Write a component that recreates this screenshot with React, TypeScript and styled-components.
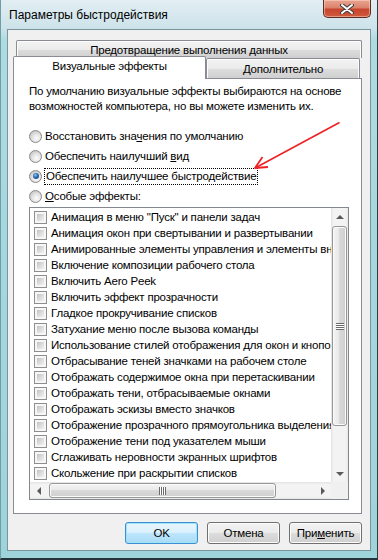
import React from "react";
import styled, { createGlobalStyle, css } from "styled-components";

const GlobalStyle = createGlobalStyle`
  html, body {
    margin: 0;
    padding: 0;
    background: #fff;
  }
  body {
    font-family: "Liberation Sans", Arial, sans-serif;
    font-size: 11.5px;
    letter-spacing: -0.2px;
    color: #000;
  }
`;

const effects = [
  'Анимация в меню "Пуск" и панели задач',
  "Анимация окон при свертывании и развертывании",
  "Анимированные элементы управления и элементы внутри окна",
  "Включение композиции рабочего стола",
  "Включить Aero Peek",
  "Включить эффект прозрачности",
  "Гладкое прокручивание списков",
  "Затухание меню после вызова команды",
  "Использование стилей отображения для окон и кнопок",
  "Отбрасывание теней значками на рабочем столе",
  "Отображать содержимое окна при перетаскивании",
  "Отображать тени, отбрасываемые окнами",
  "Отображать эскизы вместо значков",
  "Отображение прозрачного прямоугольника выделения",
  "Отображение тени под указателем мыши",
  "Сглаживать неровности экранных шрифтов",
  "Скольжение при раскрытии списков",
];

export default function App() {
  return (
    <>
      <GlobalStyle />
      <Window>
        <TitleBar>
          <Title>Параметры быстродействия</Title>
          <CloseButton>
            <svg width="14" height="10" viewBox="0 0 14 10">
              <path d="M2 1 L12 9 M12 1 L2 9" stroke="#3d3d3d" strokeWidth="4" strokeLinecap="round" />
              <path d="M2 1 L12 9 M12 1 L2 9" stroke="#ffffff" strokeWidth="2" strokeLinecap="round" />
            </svg>
          </CloseButton>
        </TitleBar>

        <Client>
          <TabArea>
            <TabRow>
              <Tab $width={346} $height={18} $indent={3}>
                Предотвращение выполнения данных
              </Tab>
            </TabRow>
            <TabRow $front>
              <Tab $width={193} $height={23} $selected>
                Визуальные эффекты
              </Tab>
              <Tab $width={154} $height={20}>
                Дополнительно
              </Tab>
            </TabRow>
          </TabArea>

          <Panel>
            <Description>
              <Line>По умолчанию визуальные эффекты выбираются на основе</Line>
              <Line>возможностей компьютера, но вы можете изменить их.</Line>
            </Description>

            <RadioGroup>
              <RadioRow>
                <RadioMark />
                <span>
                  Восстановить зна<Mn>ч</Mn>ения по умолчанию
                </span>
              </RadioRow>
              <RadioRow>
                <RadioMark />
                <span>
                  Обеспечить наилучший <Mn>в</Mn>ид
                </span>
              </RadioRow>
              <RadioRow>
                <RadioMark $checked />
                <Focused>Обеспечить наилучшее быстродействие</Focused>
              </RadioRow>
              <RadioRow>
                <RadioMark />
                <span>
                  <Mn>О</Mn>собые эффекты:
                </span>
              </RadioRow>
            </RadioGroup>

            <ListBox>
              <ListItems>
                {effects.map((text) => (
                  <ListItem key={text}>
                    <CheckMark />
                    <span>{text}</span>
                  </ListItem>
                ))}
              </ListItems>

              <VScroll>
                <ArrowBox>
                  <Arrow $dir="up" />
                </ArrowBox>
                <ScrollTrack $vertical>
                  <Thumb $vertical $size={200} $offset={1}>
                    <Grip $vertical />
                  </Thumb>
                </ScrollTrack>
                <ArrowBox>
                  <Arrow $dir="down" />
                </ArrowBox>
              </VScroll>

              <HScroll>
                <ArrowBox>
                  <Arrow $dir="left" />
                </ArrowBox>
                <ScrollTrack>
                  <Thumb $size={227} $offset={1}>
                    <Grip />
                  </Thumb>
                </ScrollTrack>
                <ArrowBox>
                  <Arrow $dir="right" />
                </ArrowBox>
              </HScroll>

              <Corner />
            </ListBox>
          </Panel>

          <ButtonRow>
            <Button $default>OK</Button>
            <Button>Отмена</Button>
            <Button>
              При<Mn>м</Mn>енить
            </Button>
          </ButtonRow>
        </Client>

        <Annotation width="378" height="560" viewBox="0 0 378 560">
          <path d="M338.5 122.5 L255 167.5" stroke="#ee2124" strokeWidth="1.6" fill="none" />
          <path d="M267 167 L254 168 L261.5 157" stroke="#ee2124" strokeWidth="1.8" fill="none" strokeLinejoin="round" />
        </Annotation>
      </Window>
    </>
  );
}

const Window = styled.div`
  position: relative;
  width: 378px;
  height: 560px;
  box-sizing: border-box;
  display: flex;
  flex-direction: column;
  background: linear-gradient(180deg, #e2eef3 0px, #cde3ea 28px, #aedbe1 40px, #a4d6dd 300px, #9fd3da 100%);
  border-left: 1px solid #6f9ea6;
  border-right: 1px solid #2f3d44;
  border-bottom: 2px solid #26333a;
  overflow: hidden;
`;

const TitleBar = styled.div`
  height: 29px;
  flex: none;
  display: flex;
  justify-content: space-between;
  align-items: flex-start;
  padding-right: 6px;
`;

const Title = styled.div`
  padding: 7px 0 0 8px;
  line-height: 16px;
  font-size: 12px;
  letter-spacing: 0;
  color: #000;
`;

const CloseButton = styled.div`
  width: 48px;
  height: 18px;
  box-sizing: border-box;
  display: flex;
  align-items: center;
  justify-content: center;
  border: 1px solid #5c2c24;
  border-top: none;
  border-radius: 0 0 5px 5px;
  background: linear-gradient(180deg, #e9a593 0%, #dc826c 45%, #c8452e 55%, #d05a3c 100%);
  box-shadow: inset 0 0 0 1px rgba(255, 220, 200, 0.5);
`;

const Client = styled.div`
  flex: 1;
  margin: 0 6px 7px 6px;
  box-sizing: border-box;
  display: flex;
  flex-direction: column;
  background: #f0f0f0;
  border: 1px solid #7b949c;
  padding: 10px 8px 6px 5px;
`;

const TabArea = styled.div`
  display: flex;
  flex-direction: column;
`;

const TabRow = styled.div<{ $front?: boolean }>`
  display: flex;
  align-items: flex-end;
  ${(p) =>
    p.$front &&
    css`
      height: 22px;
      margin-top: -2px;
    `}
`;

const Tab = styled.div<{ $width: number; $height: number; $selected?: boolean; $indent?: number }>`
  width: ${(p) => p.$width}px;
  height: ${(p) => p.$height}px;
  margin-left: ${(p) => p.$indent || 0}px;
  box-sizing: border-box;
  display: flex;
  align-items: center;
  justify-content: center;
  border: 1px solid #898c95;
  border-bottom: none;
  border-radius: 2px 2px 0 0;
  background: linear-gradient(180deg, #f3f3f3 0%, #ebebeb 50%, #dddddd 51%, #cfcfcf 100%);
  box-shadow: inset 1px 1px 0 #fcfcfc, inset -1px 0 0 #fcfcfc;
  white-space: nowrap;
  ${(p) =>
    p.$selected &&
    css`
      position: relative;
      z-index: 1;
      margin-bottom: -1px;
      padding-bottom: 4px;
      background: #fff;
      box-shadow: none;
    `}
`;

const Panel = styled.div`
  flex: 1;
  box-sizing: border-box;
  background: #fff;
  border: 1px solid #898c95;
  padding: 5px 12px 13px 15px;
  display: flex;
  flex-direction: column;
`;

const Description = styled.div`
  line-height: 15px;
`;

const Line = styled.div`
  white-space: nowrap;
`;

const RadioGroup = styled.div`
  margin-top: 12px;
  display: flex;
  flex-direction: column;
`;

const RadioRow = styled.div`
  height: 20px;
  display: flex;
  align-items: center;
  gap: 3px;
  white-space: nowrap;
`;

const RadioMark = styled.span<{ $checked?: boolean }>`
  position: relative;
  flex: none;
  width: 13px;
  height: 13px;
  box-sizing: border-box;
  border-radius: 50%;
  border: 1px solid #8a8a8a;
  background: radial-gradient(circle at 60% 65%, #fbfbfb 0%, #e9e9e9 35%, #c9c9c9 75%, #eeeeee 100%);
  ${(p) =>
    p.$checked &&
    css`
      &::after {
        content: "";
        position: absolute;
        left: 2.5px;
        top: 2.5px;
        width: 6px;
        height: 6px;
        border-radius: 50%;
        background: radial-gradient(circle at 40% 35%, #8cc8f0 0%, #2a68b0 45%, #143a6e 100%);
      }
    `}
`;

const Focused = styled.span`
  outline: 1px dotted #000;
  outline-offset: 0;
  padding: 0 1px;
  line-height: 15px;
`;

const Mn = styled.span`
  text-decoration: underline;
`;

const ListBox = styled.div`
  margin-top: 1px;
  flex: 1;
  box-sizing: border-box;
  border: 1px solid #828790;
  background: #fff;
  display: grid;
  grid-template-columns: minmax(0, 1fr) 17px;
  grid-template-rows: minmax(0, 1fr) 17px;
  overflow: hidden;
`;

const ListItems = styled.div`
  grid-column: 1;
  grid-row: 1;
  padding-top: 1px;
  overflow: hidden;
`;

const ListItem = styled.div`
  height: 16px;
  display: flex;
  align-items: center;
  gap: 4px;
  padding-left: 4px;
  white-space: nowrap;
`;

const CheckMark = styled.span`
  position: relative;
  flex: none;
  width: 13px;
  height: 13px;
  box-sizing: border-box;
  border: 1px solid #8e8f8f;
  background: #f6f6f6;
  &::after {
    content: "";
    position: absolute;
    inset: 2px;
    background: linear-gradient(135deg, #c4c4c4 0%, #dedede 55%, #f2f2f2 100%);
  }
`;

const VScroll = styled.div`
  grid-column: 2;
  grid-row: 1;
  display: flex;
  flex-direction: column;
  background: linear-gradient(90deg, #e3e3e3 0%, #f3f3f3 15%, #f3f3f3 85%, #e8e8e8 100%);
`;

const HScroll = styled.div`
  grid-column: 1;
  grid-row: 2;
  display: flex;
  background: linear-gradient(180deg, #e3e3e3 0%, #f3f3f3 15%, #f3f3f3 85%, #e8e8e8 100%);
`;

const Corner = styled.div`
  grid-column: 2;
  grid-row: 2;
  background: #f0f0f0;
`;

const ArrowBox = styled.div`
  flex: none;
  width: 17px;
  height: 17px;
  display: flex;
  align-items: center;
  justify-content: center;
`;

const Arrow = styled.span<{ $dir: "up" | "down" | "left" | "right" }>`
  width: 0;
  height: 0;
  ${(p) =>
    p.$dir === "up"
      ? css`
          border-left: 4px solid transparent;
          border-right: 4px solid transparent;
          border-bottom: 4px solid #5a5a5a;
        `
      : p.$dir === "down"
      ? css`
          border-left: 4px solid transparent;
          border-right: 4px solid transparent;
          border-top: 4px solid #5a5a5a;
        `
      : p.$dir === "left"
      ? css`
          border-top: 4px solid transparent;
          border-bottom: 4px solid transparent;
          border-right: 4px solid #5a5a5a;
        `
      : css`
          border-top: 4px solid transparent;
          border-bottom: 4px solid transparent;
          border-left: 4px solid #5a5a5a;
        `}
`;

const ScrollTrack = styled.div<{ $vertical?: boolean }>`
  flex: 1;
  display: flex;
  flex-direction: ${(p) => (p.$vertical ? "column" : "row")};
  padding: ${(p) => (p.$vertical ? "0 1px" : "1px 0")};
`;

const Thumb = styled.div<{ $vertical?: boolean; $size: number; $offset: number }>`
  box-sizing: border-box;
  display: flex;
  align-items: center;
  justify-content: center;
  border: 1px solid #979797;
  border-radius: 3px;
  ${(p) =>
    p.$vertical
      ? css`
          height: ${p.$size}px;
          margin-top: ${p.$offset}px;
          background: linear-gradient(90deg, #f4f4f4 0%, #e9e9e9 45%, #d9d9d9 50%, #cfcfcf 100%);
        `
      : css`
          width: ${p.$size}px;
          margin-left: ${p.$offset + 1}px;
          background: linear-gradient(180deg, #f4f4f4 0%, #e9e9e9 45%, #d9d9d9 50%, #cfcfcf 100%);
        `}
  box-shadow: inset 0 0 0 1px #fbfbfb;
`;

const Grip = styled.span<{ $vertical?: boolean }>`
  ${(p) =>
    p.$vertical
      ? css`
          width: 8px;
          height: 7px;
          background: repeating-linear-gradient(180deg, #6a6a6a 0 1px, #fff 1px 2px);
        `
      : css`
          width: 7px;
          height: 8px;
          background: repeating-linear-gradient(90deg, #6a6a6a 0 1px, #fff 1px 2px);
        `}
`;

const ButtonRow = styled.div`
  margin-top: 8px;
  display: flex;
  justify-content: flex-end;
  gap: 9px;
`;

const Button = styled.button<{ $default?: boolean }>`
  width: 73px;
  height: 22px;
  box-sizing: border-box;
  padding: 0;
  font: inherit;
  letter-spacing: inherit;
  color: #000;
  border: 1px solid #707070;
  border-radius: 3px;
  background: linear-gradient(180deg, #f2f2f2 0%, #ebebeb 49%, #dddddd 50%, #cfcfcf 100%);
  box-shadow: inset 0 0 0 1px #fcfcfc;
  ${(p) =>
    p.$default &&
    css`
      border-color: #3c8fd0;
      background: linear-gradient(180deg, #e9f6fd 0%, #d9f0fc 49%, #bee6fd 50%, #a9dbf6 100%);
      box-shadow: inset 0 0 0 1px #9fe3fb;
    `}
`;

const Annotation = styled.svg`
  position: absolute;
  left: 0;
  top: 0;
  pointer-events: none;
`;
